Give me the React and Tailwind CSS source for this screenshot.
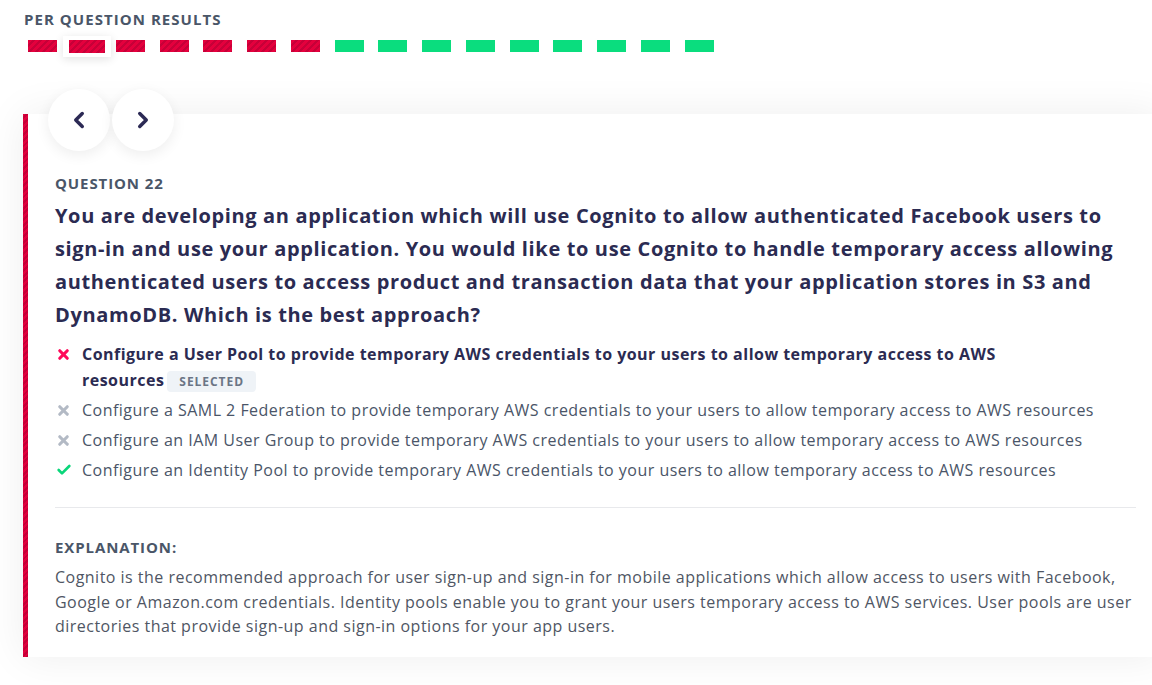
import { ChevronLeft, ChevronRight, X, Check } from 'lucide-react'

const RESULTS = [
  false, false, false, false, false, false, false,
  true, true, true, true, true, true, true, true, true,
]
const CURRENT = 1

const OPTIONS = [
  { text: 'Configure a User Pool to provide temporary AWS credentials to your users to allow temporary access to AWS resources', state: 'wrong', selected: true },
  { text: 'Configure a SAML 2 Federation to provide temporary AWS credentials to your users to allow temporary access to AWS resources', state: 'other' },
  { text: 'Configure an IAM User Group to provide temporary AWS credentials to your users to allow temporary access to AWS resources', state: 'other' },
  { text: 'Configure an Identity Pool to provide temporary AWS credentials to your users to allow temporary access to AWS resources', state: 'correct' },
]

const stripeRed = 'bg-[repeating-linear-gradient(135deg,#e2003d_0px,#e2003d_2px,#c40037_2px,#c40037_4px)]'

function ResultBar({ ok, current }) {
  const bar = ok
    ? 'bg-[#0add7e]'
    : 'bg-[repeating-linear-gradient(135deg,#e4003d_0px,#e4003d_3px,#c70038_3px,#c70038_5px)]'
  return (
    <div className="w-[43.75px] h-[12px] flex items-center justify-center shrink-0">
      {current ? (
        <div className="px-[6px] py-[4px] bg-white shadow-[0_2px_10px_rgba(0,0,0,0.12)] shrink-0">
          <div className={`w-[36px] h-[13px] ${bar}`} />
        </div>
      ) : (
        <div className={`w-[29px] h-[12px] ${bar}`} />
      )}
    </div>
  )
}

function OptionIcon({ state }) {
  if (state === 'correct') return <Check className="w-[16px] h-[16px] text-[#0ad67a]" strokeWidth={4} />
  if (state === 'wrong') return <X className="w-[15px] h-[15px] text-[#ff0a5a]" strokeWidth={5} />
  return <X className="w-[15px] h-[15px] text-[#b3bac5]" strokeWidth={5} />
}

function OptionText({ text, selected }) {
  if (!selected) return <span className="text-[#4a5568]">{text}</span>
  // keep the last word together with the badge so they wrap as one
  const cut = text.lastIndexOf(' ')
  return (
    <span className="font-bold text-[#2b2b52]">
      {text.slice(0, cut)}{' '}
      <span className="whitespace-nowrap">
        {text.slice(cut + 1)}
        <span className="ml-[3px] inline-block align-middle px-[12px] h-[21px] leading-[21px] rounded bg-[#eff3f7] text-[12px] font-bold tracking-[0.08em] text-[#6b7585]">SELECTED</span>
      </span>
    </span>
  )
}

export default function App() {
  return (
    <div className="w-screen h-[685px] overflow-hidden bg-white font-['Open_Sans',sans-serif]">
      <div className="px-6 pt-[8px]">
        <h3 className="text-[15px] font-bold tracking-[0.07em] text-[#4a5668] leading-[22px]">PER QUESTION RESULTS</h3>
        {/* Result strip */}
        <div className="flex items-center -ml-[3px] mt-[10px]">
          {RESULTS.map((ok, i) => <ResultBar key={i} ok={ok} current={i === CURRENT} />)}
        </div>
      </div>

      {/* Question card */}
      <div className="ml-[23px] mt-[62px] w-[1140px] flex bg-white shadow-[0_0_40px_rgba(0,0,0,0.07)]">
        <div className={`w-[5px] shrink-0 ${stripeRed}`} />
        <div className="flex-1 pl-[27px] pr-[27px] pb-[18px]">
          <div className="flex -mt-[25px] -ml-[7px] gap-[2px]">
            <button type="button" className="w-[62px] h-[62px] rounded-full bg-white shadow-[0_4px_14px_rgba(0,0,0,0.07)] flex items-center justify-center">
              <ChevronLeft className="w-[26px] h-[26px] text-[#2c2a55]" strokeWidth={3.2} />
            </button>
            <button type="button" className="w-[62px] h-[62px] rounded-full bg-white shadow-[0_4px_14px_rgba(0,0,0,0.07)] flex items-center justify-center">
              <ChevronRight className="w-[26px] h-[26px] text-[#2c2a55]" strokeWidth={3.2} />
            </button>
          </div>

          <div className="mt-[21px] text-[15px] font-bold tracking-[0.06em] text-[#4a5668] leading-[22px]">QUESTION 22</div>
          <p className="mt-[5px] text-[20px] font-bold tracking-[0.032em] text-[#2b2b52] leading-[33px]">
            You are developing an application which will use Cognito to allow authenticated Facebook users to sign-in and use your application. You would like to use Cognito to handle temporary access allowing authenticated users to access product and transaction data that your application stores in S3 and DynamoDB. Which is the best approach?
          </p>

          <ul className="mt-[10px] flex flex-col gap-[4px] tracking-[0.03em]">
            {OPTIONS.map((o, i) => (
              <li key={i} className="flex items-start gap-[10px] text-[16px] leading-[26px]">
                <span className="w-[17px] h-[26px] flex items-center justify-center shrink-0">
                  <OptionIcon state={o.state} />
                </span>
                <OptionText text={o.text} selected={o.selected} />
              </li>
            ))}
          </ul>

          <div className="mt-[24px] border-t border-[#e8e9ec]" />

          <div className="mt-[28px] text-[15px] font-bold tracking-[0.06em] text-[#4a5668] leading-[22px]">EXPLANATION:</div>
          <p className="mt-[7px] text-[16px] tracking-[0.03em] text-[#4f5664] leading-[24.5px]">
            Cognito is the recommended approach for user sign-up and sign-in for mobile applications which allow access to users with Facebook, Google or Amazon.com credentials. Identity pools enable you to grant your users temporary access to AWS services. User pools are user directories that provide sign-up and sign-in options for your app users.
          </p>
        </div>
      </div>
    </div>
  )
}
